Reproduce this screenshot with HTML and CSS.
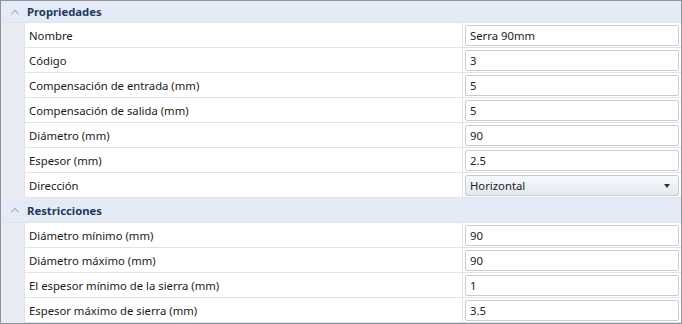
FILE: index.html
```
<!DOCTYPE html>
<html lang="es">
<head>
    <meta charset="UTF-8">
    <title>Propiedades</title>
    <link rel="stylesheet" href="styles.css">
</head>
<body>
    <div class="grid">
        <div class="section first">
            <div class="section-head"><span class="chevron"></span>Propriedades</div>
            <div class="rows">
                <div class="row"><div class="label">Nombre</div><div class="value"><div class="box">Serra 90mm</div></div></div>
                <div class="row"><div class="label">Código</div><div class="value"><div class="box">3</div></div></div>
                <div class="row"><div class="label">Compensación de entrada (mm)</div><div class="value"><div class="box">5</div></div></div>
                <div class="row"><div class="label">Compensación de salida (mm)</div><div class="value"><div class="box">5</div></div></div>
                <div class="row"><div class="label">Diámetro (mm)</div><div class="value"><div class="box">90</div></div></div>
                <div class="row"><div class="label">Espesor (mm)</div><div class="value"><div class="box">2.5</div></div></div>
                <div class="row"><div class="label">Dirección</div><div class="value"><div class="box combo">Horizontal<span class="arrow"></span></div></div></div>
            </div>
        </div>
        <div class="section">
            <div class="section-head"><span class="chevron"></span>Restricciones</div>
            <div class="rows">
                <div class="row"><div class="label">Diámetro mínimo (mm)</div><div class="value"><div class="box">90</div></div></div>
                <div class="row"><div class="label">Diámetro máximo (mm)</div><div class="value"><div class="box">90</div></div></div>
                <div class="row"><div class="label">El espesor mínimo de la sierra (mm)</div><div class="value"><div class="box">1</div></div></div>
                <div class="row"><div class="label">Espesor máximo de sierra (mm)</div><div class="value"><div class="box">3.5</div></div></div>
            </div>
        </div>
    </div>
</body>
</html>
```
FILE: styles.css
```
body {
    margin: 0;
    font-family: "Noto Sans", "Open Sans", sans-serif;
    font-size: 11.3px;
    color: #1a1a1a;
    background: #f0f0f0;
}
.grid {
    width: 680px;
    height: 322px;
    border: 1px solid #8f9296;
    background: #e9edf3;
    overflow: hidden;
}
.section-head {
    height: 24px;
    display: flex;
    align-items: center;
    background: #e4ebf7;
    border-bottom: 1px solid #dde3ea;
    font-weight: bold;
    color: #1e395b;
}
.section.first .section-head {
    height: 21px;
}
.chevron {
    width: 7px;
    height: 7px;
    margin: 4px 8px 0 10px;
    border-left: 1px solid #8a929c;
    border-top: 1px solid #8a929c;
    transform: rotate(45deg) scale(0.7);
}
.rows {
    margin-left: 23px;
    background: #fff;
    border-left: 1px solid #dde3ea;
}
.row {
    display: flex;
    height: 24px;
    border-bottom: 1px solid #dde3ea;
}
.label {
    width: 433px;
    padding-left: 4px;
    display: flex;
    align-items: center;
    border-right: 1px solid #dde3ea;
}
.value {
    flex: 1;
    padding: 2px 2px 1px 2px;
}
.box {
    height: 19px;
    border: 1px solid #c9ccd1;
    border-radius: 2px;
    background: #fff;
    padding-left: 4px;
    display: flex;
    align-items: center;
    color: #222;
}
.combo {
    background: linear-gradient(#f7f9fc, #e3e9f1);
    position: relative;
}
.arrow {
    position: absolute;
    right: 8px;
    top: 8px;
    border-left: 3px solid transparent;
    border-right: 3px solid transparent;
    border-top: 4px solid #333;
}
```
